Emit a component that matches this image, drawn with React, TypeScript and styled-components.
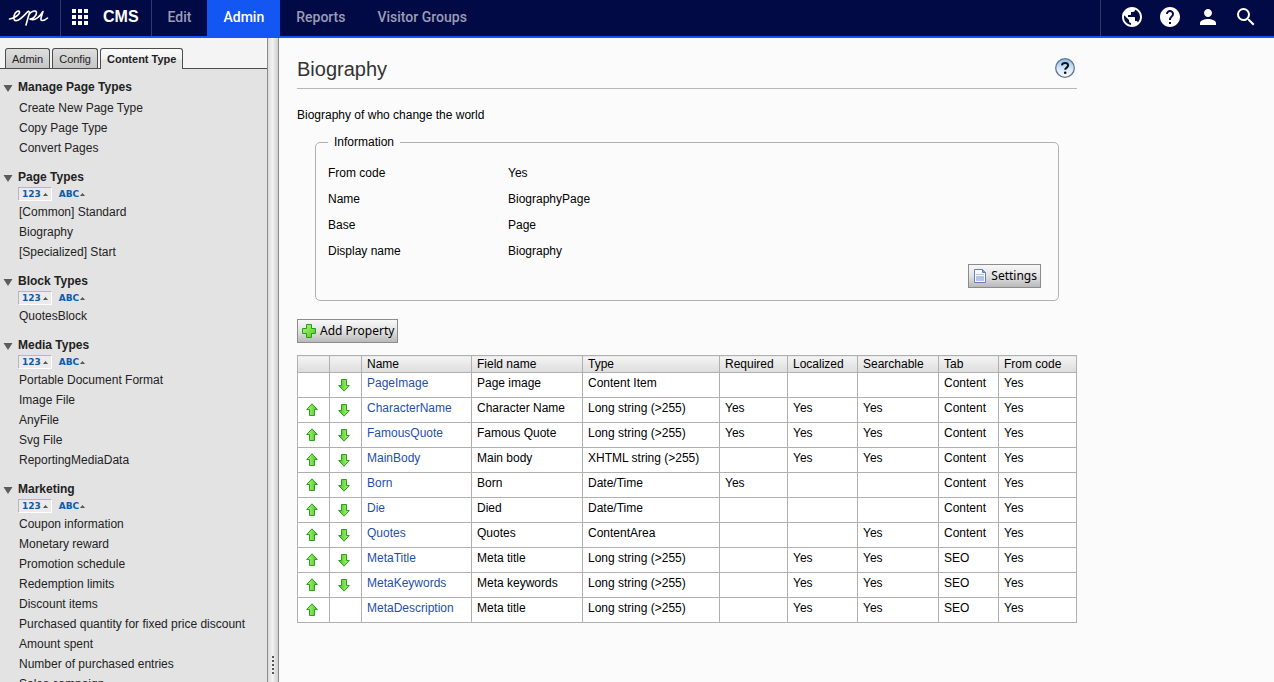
import React from 'react';
import styled, { createGlobalStyle, css } from 'styled-components';
import { MdHelp, MdPerson, MdPublic, MdSearch } from 'react-icons/md';

const GlobalStyle = createGlobalStyle`
  * { box-sizing: border-box; }
  body {
    margin: 0;
    background: #fbfbfb;
    color: #000;
    font: 12px/20px "Liberation Sans", Arial, sans-serif;
  }
  button { font: inherit; color: inherit; cursor: pointer; }
  a { text-decoration: none; color: inherit; }
  ul { list-style: none; margin: 0; padding: 0; }
`;

const Page = styled.div`
  display: flex;
  flex-direction: column;
  height: 100vh;
  overflow: hidden;
`;

const Header = styled.header`
  display: flex;
  flex: none;
  height: 38px;
  background: #020a45;
  border-bottom: 2px solid #1456f1;
  color: #fff;
`;

const Logo = styled.a`
  display: flex;
  align-items: center;
  width: 61px;
  padding: 0 0 2px 8px;
  border-right: 1px solid #343a6a;
`;

const Product = styled.button`
  display: flex;
  align-items: center;
  gap: 15px;
  padding: 0 12px 2px 11px;
  border: 0;
  border-right: 1px solid #343a6a;
  background: none;
  color: #fff;
  font: bold 16px/20px "Liberation Sans", Arial, sans-serif;
`;

const Nav = styled.nav`
  display: flex;
  flex: 1;
`;

const NavLink = styled.a<{ $active?: boolean }>`
  padding: 7px 16px 0;
  font: 500 14px/20px Roboto, sans-serif;
  color: ${p => (p.$active ? '#fff' : '#9a9db5')};
  background: ${p => (p.$active ? '#1456f1' : 'transparent')};
`;

const Tools = styled.div`
  display: flex;
  align-items: center;
  gap: 14px;
  padding: 0 16px 2px 19px;
  border-left: 1px solid #343a6a;
`;

const ToolButton = styled.button`
  display: flex;
  padding: 0;
  border: 0;
  background: none;
  color: #fff;
`;

const Body = styled.div`
  display: flex;
  flex: 1;
  min-height: 0;
`;

const Sidebar = styled.aside`
  flex: none;
  width: 267px;
  overflow: hidden;
  background: #e3e3e3;
  color: #222;
`;

const TabStrip = styled.div`
  display: flex;
  gap: 2px;
  height: 31px;
  padding: 10px 5px 0;
  background: #f4f4f4;
  border-bottom: 1px solid #4c4c4c;
`;

const Tab = styled.button<{ $active?: boolean }>`
  height: ${p => (p.$active ? 21 : 20)}px;
  padding: 0 6px;
  border: 1px solid #4c4c4c;
  border-bottom: 0;
  border-radius: 3px 3px 0 0;
  background: linear-gradient(#dedede, #c6c6c6);
  font-size: 11px;
  line-height: 18px;
  ${p => p.$active && css`
    background: linear-gradient(#fafafa 0, #f2f2f2 50%, #e4e4e4 55%, #e3e3e3);
    font-weight: 700;
  `}
`;

const Menu = styled.div`
  display: flex;
  flex-direction: column;
  gap: 10px;
  padding-top: 9px;
`;

const SectionTitle = styled.h2`
  display: flex;
  align-items: center;
  gap: 5px;
  height: 19px;
  margin: 0;
  padding-left: 3px;
  font-size: 12px;
  line-height: 19px;
`;

const SortBar = styled.div`
  display: flex;
  gap: 3px;
  height: 14px;
  padding-left: 18px;
`;

const SortButton = styled.button<{ $pressed?: boolean }>`
  display: flex;
  align-items: center;
  gap: ${p => (p.$pressed ? 2 : 1)}px;
  padding: 0 3px;
  border: 1px solid transparent;
  background: none;
  color: #0a5cab;
  font: bold 9px/12px "DejaVu Sans", sans-serif;
  ${p => p.$pressed && css`
    border-color: #b9b9a5 #fff #fff #b9b9a5;
    background: #ebebeb;
  `}
`;

const ItemList = styled.ul`
  padding: 1px 0 0 19px;
  white-space: nowrap;
`;

const Splitter = styled.div`
  display: flex;
  flex: none;
  align-items: flex-end;
  justify-content: center;
  width: 12px;
  padding-bottom: 8px;
  border: solid #8a8a8a;
  border-width: 0 1px;
  background: linear-gradient(90deg, #dcdcdc, #f2f2f2 45%, #cfcfcf);
`;

const Main = styled.main`
  flex: 1;
  min-width: 0;
  padding: 0 18px;
  overflow: auto;
`;

const Content = styled.div`
  max-width: 780px;
`;

const TitleBar = styled.div`
  display: flex;
  align-items: flex-end;
  justify-content: space-between;
  height: 51px;
  padding: 0 1px 9px 0;
  border-bottom: 1px solid #b7b7b7;
`;

const Title = styled.h1`
  margin: 0;
  color: #333;
  font-size: 20px;
  line-height: 20px;
  font-weight: 400;
`;

const Description = styled.p`
  margin: 16px 0 10px;
`;

const Fieldset = styled.fieldset`
  margin: 0 18px;
  padding: 10px 17px 12px 12px;
  border: 1px solid #b0b0b0;
  border-radius: 5px;
`;

const Legend = styled.legend`
  padding: 0 6px;
  line-height: 15px;
`;

const Details = styled.dl`
  display: grid;
  grid-template-columns: 180px 1fr;
  margin: 0;
  line-height: 26px;
`;

const Value = styled.dd`
  margin: 0;
`;

const Actions = styled.div`
  display: flex;
  justify-content: flex-end;
`;

const PushButton = styled.button`
  display: flex;
  align-items: center;
  gap: 2px;
  height: 24px;
  padding: 0 3px 0 4px;
  border: 1px solid #8c8c8c;
  background: linear-gradient(#f8f8f8, #e2e2e2 50%, #b9b9b9);
  font: 12px/20px "Noto Sans", sans-serif;
`;

const Toolbar = styled.div`
  display: flex;
  margin: 18px 0 12px;
`;

const Table = styled.table`
  width: 100%;
  table-layout: fixed;
  border-collapse: collapse;
  line-height: 18px;
`;

const HeadCell = styled.th<{ $width: string }>`
  width: ${p => p.$width};
  height: 17px;
  padding: 0 5px;
  border: 1px solid #b0b0b0;
  background: linear-gradient(#f4f4f4, #dcdcdc);
  font-weight: 400;
  line-height: 16px;
  text-align: left;
`;

const Cell = styled.td`
  height: 25px;
  padding: 1px 5px 0;
  border: 1px solid #b0b0b0;
  background: #fff;
  vertical-align: top;
  white-space: nowrap;
`;

const PropertyLink = styled.a`
  color: #1f4fa8;
`;

const MoveButton = styled.button`
  display: block;
  width: 12px;
  height: 14px;
  margin: 4px 0 0 3px;
  padding: 0;
  border: 0;
  background: none;
`;

const LogoMark = () => (
  <svg width="41" height="20" viewBox="0 0 41 20" fill="none" stroke="#fff" strokeWidth="1.6" strokeLinecap="round" strokeLinejoin="round" aria-label="epi">
    <path d="M1.500 12C6 11.500 12 7.500 11.500 5C11 3 7 4.500 6 9C5.300 12.500 6.500 14 9 13.500C13 12.500 17 7 20.500 4.200C22 4.500 21.500 6.500 20.800 8L18 18M20.800 8C22.500 4.500 28 2.500 28.500 5.500C28.800 8.500 25 12 22 12C27 14.500 32.500 9 35 4.500C34 8 31.500 13.500 34 13.500C36 13.500 38 12.500 39.500 11" />
  </svg>
);

const AppGrid = () => (
  <svg width="16" height="16" fill="#fff" aria-hidden="true">
    {[0, 6, 12].map(y => [0, 6, 12].map(x => <rect key={`${x}-${y}`} x={x} y={y} width="4" height="4" />))}
  </svg>
);

const Triangle = () => (
  <svg width="10" height="8" aria-hidden="true">
    <path d="M0.500 1H9.500L5 8Z" fill="#5c5c5c" />
  </svg>
);

const Caret = () => (
  <svg width="5" height="3" aria-hidden="true">
    <path d="M0 3L2.500 0L5 3Z" fill="#555" />
  </svg>
);

const Grip = () => (
  <svg width="2" height="18" aria-hidden="true">
    {[0, 4, 8, 12, 16].map(y => <rect key={y} y={y} width="2" height="2" fill="#555" />)}
  </svg>
);

const Arrow = ({ down }: { down?: boolean }) => (
  <svg width="12" height="14" viewBox="0 0 12 14" aria-hidden="true">
    <defs>
      <linearGradient id="arrowFill">
        <stop offset="0" stopColor="#b5f77c" />
        <stop offset="1" stopColor="#3fc91d" />
      </linearGradient>
    </defs>
    <path
      d="M6 0.800L11.300 6.500H8.500V12.500H3.500V6.500H0.700Z"
      transform={down ? 'rotate(180 6 7)' : undefined}
      fill="url(#arrowFill)"
      stroke="#2f9c22"
      strokeLinejoin="round"
    />
  </svg>
);

const Plus = () => (
  <svg width="16" height="16" aria-hidden="true">
    <defs>
      <linearGradient id="plusFill" x2="1" y2="1">
        <stop offset="0" stopColor="#b5f77c" />
        <stop offset="1" stopColor="#46c922" />
      </linearGradient>
    </defs>
    <path d="M4.500 1.500H9.500V5.500H13.500V10.500H9.500V14.500H4.500V10.500H0.500V5.500H4.500Z" fill="url(#plusFill)" stroke="#2a9a1c" strokeLinejoin="round" />
  </svg>
);

const Document = () => (
  <svg width="16" height="14" aria-hidden="true">
    <path d="M1.500 0.500H9.500L12.500 3.500V13.500H1.500Z" fill="#f6f9ff" stroke="#6480b4" />
    <path d="M9.500 0.500V3.500H12.500" fill="#7f97c4" stroke="#6480b4" />
    <path d="M3 5H11V6H3ZM3 7H11V12H3Z" fill="#b4c3e2" />
  </svg>
);

const HelpIcon = () => (
  <svg width="22" height="22" viewBox="0 0 22 22" fill="none" aria-hidden="true">
    <defs>
      <linearGradient id="helpFill" x2="0" y2="1">
        <stop offset="0" stopColor="#8dbcf0" />
        <stop offset="0.600" stopColor="#dcecfb" />
        <stop offset="1" stopColor="#f8fcff" />
      </linearGradient>
    </defs>
    <circle cx="11" cy="11" r="9.300" fill="url(#helpFill)" stroke="#62758f" strokeWidth="1.300" />
    <path d="M8 8.300C8.200 6.700 9.500 6.100 11 6.100C12.800 6.100 14.100 7 14.100 8.500C14.100 10.500 11.200 10.700 11.200 12.800" stroke="#111" strokeWidth="2" />
    <circle cx="11.200" cy="15.800" r="1.300" fill="#111" />
  </svg>
);

const sections = [
  { title: 'Manage Page Types', sort: false, items: ['Create New Page Type', 'Copy Page Type', 'Convert Pages'] },
  { title: 'Page Types', sort: true, items: ['[Common] Standard', 'Biography', '[Specialized] Start'] },
  { title: 'Block Types', sort: true, items: ['QuotesBlock'] },
  { title: 'Media Types', sort: true, items: ['Portable Document Format', 'Image File', 'AnyFile', 'Svg File', 'ReportingMediaData'] },
  {
    title: 'Marketing',
    sort: true,
    items: [
      'Coupon information', 'Monetary reward', 'Promotion schedule', 'Redemption limits', 'Discount items',
      'Purchased quantity for fixed price discount', 'Amount spent', 'Number of purchased entries', 'Sales campaign',
    ],
  },
];

const details = [
  ['From code', 'Yes'],
  ['Name', 'BiographyPage'],
  ['Base', 'Page'],
  ['Display name', 'Biography'],
];

const columns: [string, string][] = [
  ['', '32px'], ['', '32px'], ['Name', '110px'], ['Field name', '111px'], ['Type', '137px'],
  ['Required', '68px'], ['Localized', '70px'], ['Searchable', '81px'], ['Tab', '60px'], ['From code', 'auto'],
];

// name, field name, type, required, localized, searchable, tab
const properties = [
  ['PageImage', 'Page image', 'Content Item', '', '', '', 'Content'],
  ['CharacterName', 'Character Name', 'Long string (>255)', 'Yes', 'Yes', 'Yes', 'Content'],
  ['FamousQuote', 'Famous Quote', 'Long string (>255)', 'Yes', 'Yes', 'Yes', 'Content'],
  ['MainBody', 'Main body', 'XHTML string (>255)', '', 'Yes', 'Yes', 'Content'],
  ['Born', 'Born', 'Date/Time', 'Yes', '', '', 'Content'],
  ['Die', 'Died', 'Date/Time', '', '', '', 'Content'],
  ['Quotes', 'Quotes', 'ContentArea', '', '', 'Yes', 'Content'],
  ['MetaTitle', 'Meta title', 'Long string (>255)', '', 'Yes', 'Yes', 'SEO'],
  ['MetaKeywords', 'Meta keywords', 'Long string (>255)', '', 'Yes', 'Yes', 'SEO'],
  ['MetaDescription', 'Meta title', 'Long string (>255)', '', 'Yes', 'Yes', 'SEO'],
];

export default function App() {
  return (
    <Page>
      <GlobalStyle />
      <Header>
        <Logo href="#"><LogoMark /></Logo>
        <Product><AppGrid />CMS</Product>
        <Nav>
          <NavLink href="#">Edit</NavLink>
          <NavLink href="#" $active>Admin</NavLink>
          <NavLink href="#">Reports</NavLink>
          <NavLink href="#">Visitor Groups</NavLink>
        </Nav>
        <Tools>
          <ToolButton aria-label="Sites"><MdPublic size={24} /></ToolButton>
          <ToolButton aria-label="Help"><MdHelp size={24} /></ToolButton>
          <ToolButton aria-label="User"><MdPerson size={24} /></ToolButton>
          <ToolButton aria-label="Search"><MdSearch size={24} /></ToolButton>
        </Tools>
      </Header>
      <Body>
        <Sidebar>
          <TabStrip>
            <Tab>Admin</Tab>
            <Tab>Config</Tab>
            <Tab $active>Content Type</Tab>
          </TabStrip>
          <Menu>
            {sections.map(section => (
              <section key={section.title}>
                <SectionTitle><Triangle />{section.title}</SectionTitle>
                {section.sort && (
                  <SortBar>
                    <SortButton $pressed>123<Caret /></SortButton>
                    <SortButton>ABC<Caret /></SortButton>
                  </SortBar>
                )}
                <ItemList>
                  {section.items.map(item => <li key={item}><a href="#">{item}</a></li>)}
                </ItemList>
              </section>
            ))}
          </Menu>
        </Sidebar>
        <Splitter><Grip /></Splitter>
        <Main>
          <Content>
            <TitleBar>
              <Title>Biography</Title>
              <ToolButton aria-label="Page help"><HelpIcon /></ToolButton>
            </TitleBar>
            <Description>Biography of who change the world</Description>
            <Fieldset>
              <Legend>Information</Legend>
              <Details>
                {details.map(([label, value]) => (
                  <React.Fragment key={label}>
                    <dt>{label}</dt>
                    <Value>{value}</Value>
                  </React.Fragment>
                ))}
              </Details>
              <Actions><PushButton><Document />Settings</PushButton></Actions>
            </Fieldset>
            <Toolbar><PushButton><Plus />Add Property</PushButton></Toolbar>
            <Table>
              <thead>
                <tr>{columns.map(([label, width], i) => <HeadCell key={i} $width={width}>{label}</HeadCell>)}</tr>
              </thead>
              <tbody>
                {properties.map(([name, ...rest], i) => (
                  <tr key={name}>
                    <Cell>{i > 0 && <MoveButton aria-label="Move up"><Arrow /></MoveButton>}</Cell>
                    <Cell>{i < properties.length - 1 && <MoveButton aria-label="Move down"><Arrow down /></MoveButton>}</Cell>
                    <Cell><PropertyLink href="#">{name}</PropertyLink></Cell>
                    {rest.map((text, j) => <Cell key={j}>{text}</Cell>)}
                    <Cell>Yes</Cell>
                  </tr>
                ))}
              </tbody>
            </Table>
          </Content>
        </Main>
      </Body>
    </Page>
  );
}
